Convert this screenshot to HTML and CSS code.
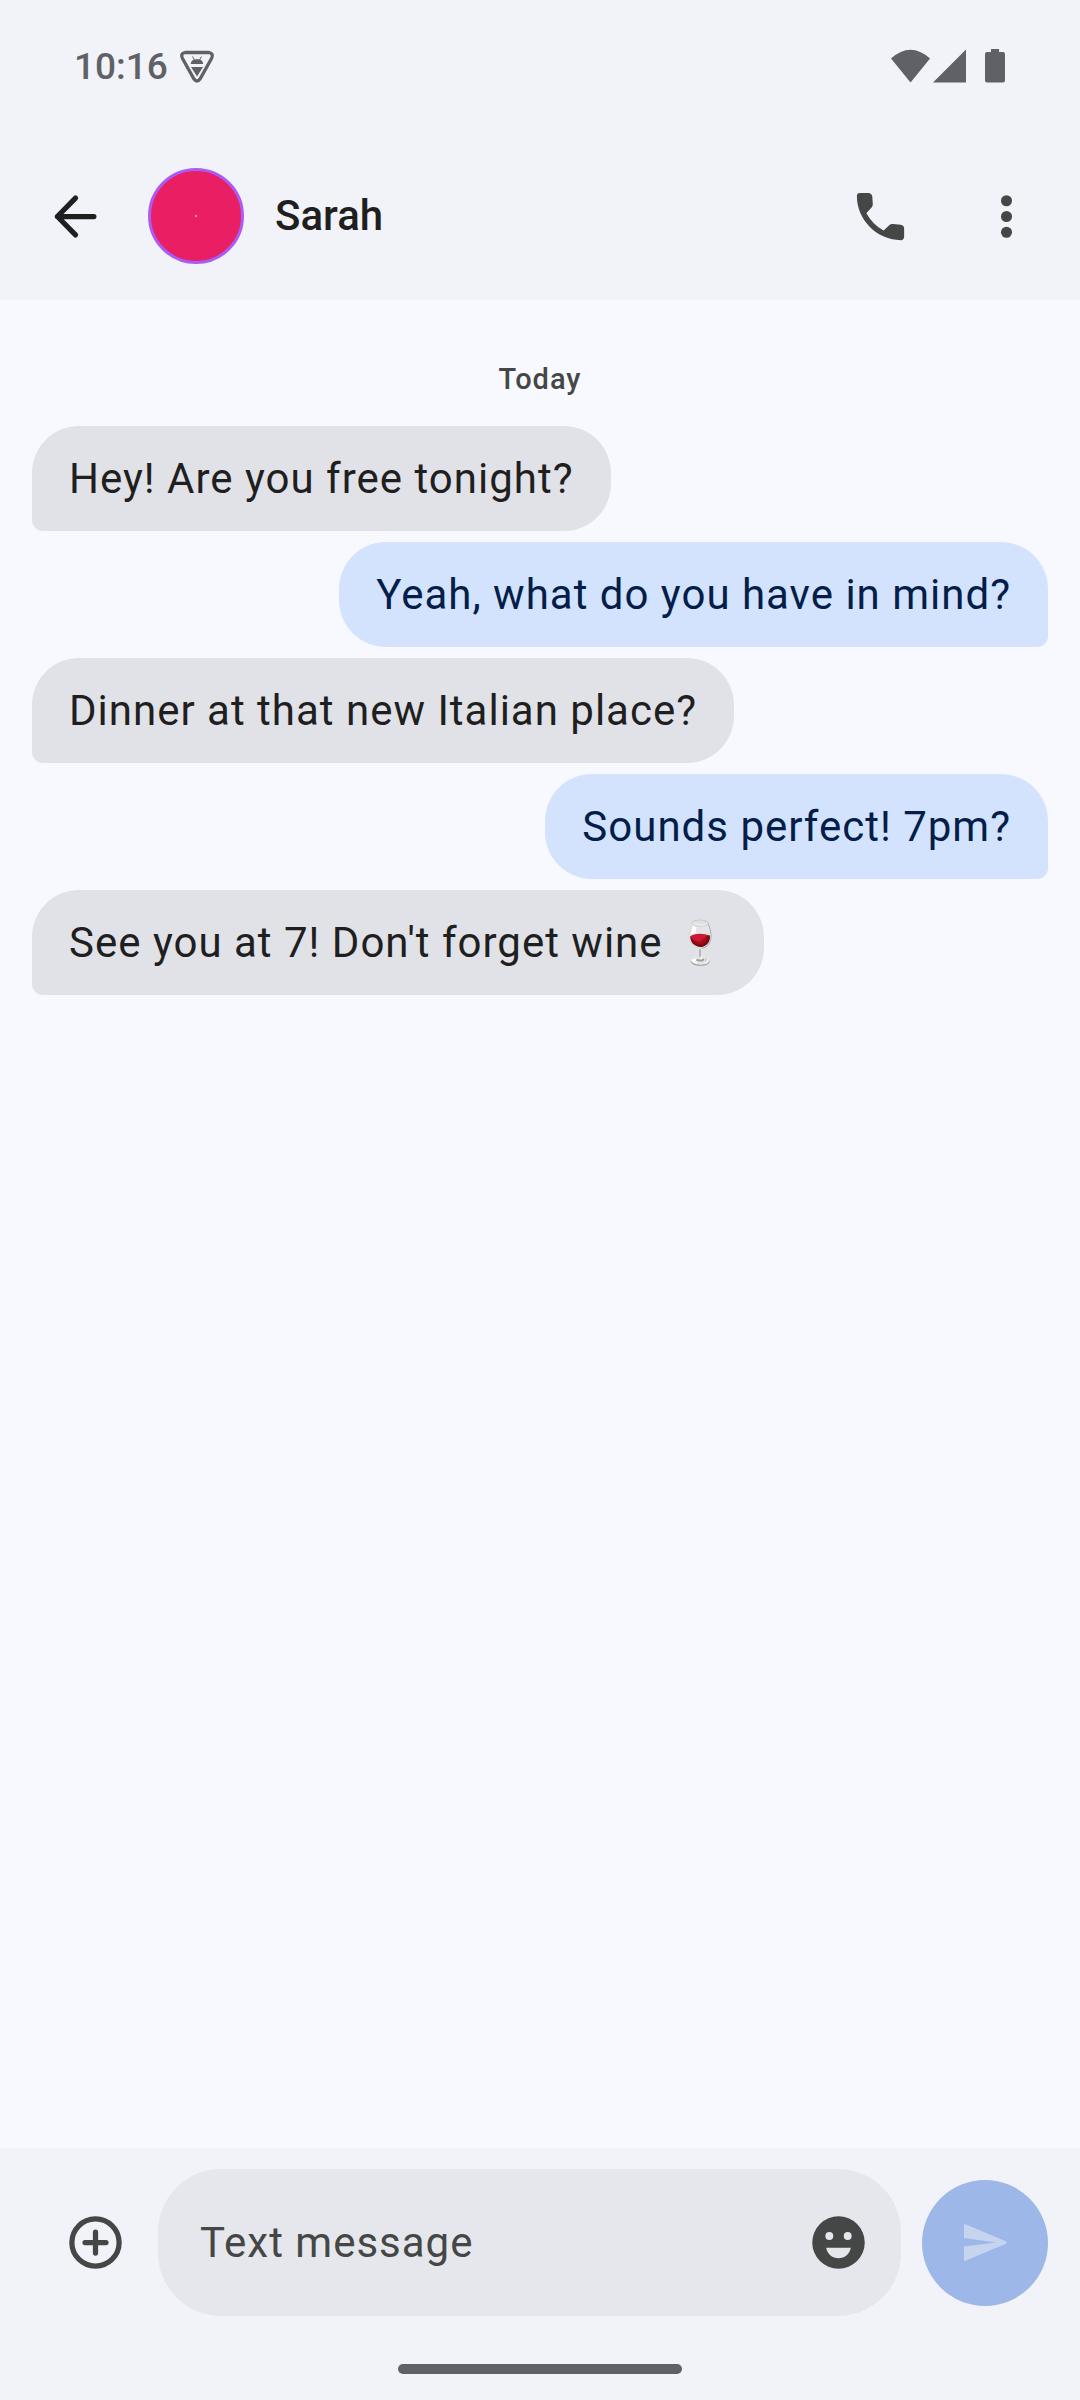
FILE: index.html
```html
<!DOCTYPE html>
<html lang="en">
<head>
<meta charset="utf-8">
<meta name="viewport" content="width=device-width, initial-scale=1">
<title>Sarah</title>
<link rel="stylesheet" href="styles.css">
</head>
<body>
<div class="screen">
  <header class="top">
    <div class="status">
      <time class="clock">10:16</time>
      <svg class="debug-icon" viewBox="0 0 36 34" aria-hidden="true">
        <path d="M6 3.500H30Q35 4.500 32.500 9.500L21 30Q18 34 15 30L3.500 9.500Q1 4.500 6 3.500Z" fill="none" stroke="currentColor" stroke-width="3.300"/>
        <path d="M11.800 15C12 11.500 14.600 10.200 18 10.200S24 11.500 24.200 15ZM12 18H24L18 27.500Z" fill="currentColor"/>
        <path d="M13.500 7.500l2 3.500M22.500 7.500l-2 3.500" fill="none" stroke="currentColor" stroke-width="1"/>
      </svg>
      <svg class="status-right" viewBox="0 0 116 36" aria-hidden="true" fill="currentColor">
        <path d="M20.500 34.500L1 10.500Q20.500-7 40 10.500Z"/>
        <path d="M43 34.500H76V1.500Z"/>
        <path d="M101 1h8v3h4q2 0 2 2v26.500q0 2-2 2H97q-2 0-2-2V6q0-2 2-2h4Z"/>
      </svg>
    </div>
    <div class="app-bar">
      <button class="icon-button back" type="button" aria-label="Back">
        <svg viewBox="0 0 24 24" fill="none" stroke="currentColor" stroke-width="2" stroke-linecap="round" stroke-linejoin="round"><path d="M12 5L5.100 12L12 19M5.100 12H19"/></svg>
      </button>
      <span class="avatar"></span>
      <h1 class="name">Sarah</h1>
      <button class="icon-button" type="button" aria-label="Call">
        <svg viewBox="0 0 24 24" fill="currentColor"><path d="M4.200 3H7.400C8.200 3 8.700 3.500 8.850 4.200L9.050 6.900C9.100 7.600 9 8.200 8.600 8.600L6.600 10.750C8.200 13.600 10.400 15.800 13.200 17.350L15.300 15.300C15.700 14.950 16.200 14.850 16.800 14.900L19.700 15.150C20.600 15.300 21 15.800 21 16.600V19.600C21 20.400 20.600 21 19.800 21C10.700 21 3 13.300 3 4.200Q3 3 4.200 3Z"/></svg>
      </button>
      <button class="icon-button" type="button" aria-label="More options">
        <svg viewBox="0 0 24 24" fill="currentColor"><circle cx="12" cy="6" r="2.100"/><circle cx="12" cy="12" r="2.100"/><circle cx="12" cy="18" r="2.100"/></svg>
      </button>
    </div>
  </header>

  <main class="thread">
    <h2 class="day">Today</h2>
    <p class="bubble in">Hey! Are you free tonight?</p>
    <p class="bubble out">Yeah, what do you have in mind?</p>
    <p class="bubble in">Dinner at that new Italian place?</p>
    <p class="bubble out">Sounds perfect! 7pm?</p>
    <p class="bubble in">See you at 7! Don't forget wine 🍷</p>
  </main>

  <footer class="bottom">
    <form class="composer">
      <button class="icon-button" type="button" aria-label="Add attachment">
        <svg viewBox="0 0 24 24" fill="none" stroke="currentColor" stroke-width="2" stroke-linecap="round"><circle cx="12" cy="12" r="9"/><path d="M12 8v8M8 12h8"/></svg>
      </button>
      <div class="field">
        <input class="message" type="text" placeholder="Text message" aria-label="Text message">
        <button class="icon-button" type="button" aria-label="Emoji">
          <svg viewBox="0 0 24 24" fill="currentColor"><path fill-rule="evenodd" d="M12 2a10 10 0 1 1 0 20a10 10 0 1 1 0-20ZM8.500 8a1.500 1.500 0 1 0 0 3a1.500 1.500 0 1 0 0-3ZM15.500 8a1.500 1.500 0 1 0 0 3a1.500 1.500 0 1 0 0-3ZM7.300 14C7.800 16.500 9.700 18 12 18S16.200 16.500 16.700 14Z"/></svg>
        </button>
      </div>
      <button class="send" type="submit" aria-label="Send" disabled>
        <svg viewBox="0 0 24 24" fill="currentColor"><path d="M3.800 5.300Q4 4.800 4.600 5.100L19.700 11.500Q20.400 12 19.700 12.500L4.600 18.900Q4 19.200 3.800 18.700V13.500L16 12L3.800 10.300Z"/></svg>
      </button>
    </form>
    <div class="home-bar"></div>
  </footer>
</div>
</body>
</html>
```

FILE: styles.css
```css
* { box-sizing: border-box; }

body {
  margin: 0;
  font-family: Roboto, "Noto Sans", "Noto Color Emoji", sans-serif;
  color: #1f1f1f;
  background: #f8f9fe;
}

.screen {
  display: flex;
  flex-direction: column;
  min-height: 100vh;
}

button {
  border: 0;
  padding: 0;
  background: none;
  color: inherit;
  font: inherit;
}

.top, .bottom { background: #f1f3f8; }

.status {
  display: flex;
  align-items: center;
  height: 132px;
  padding: 0 74px;
  color: #5f6166;
}

.clock {
  font-size: 37px;
  font-weight: 500;
}

.debug-icon {
  width: 36px;
  height: 34px;
  margin-left: 11px;
}

.status-right {
  width: 116px;
  height: 36px;
  margin-left: auto;
}

.app-bar {
  display: flex;
  align-items: center;
  height: 168px;
  padding: 0 11px 0 12px;
  color: #444746;
}

.icon-button {
  display: grid;
  place-items: center;
  flex: none;
  width: 126px;
  height: 126px;
}

.icon-button svg, .send svg {
  width: 63px;
  height: 63px;
}

.back { color: #1f1f1f; }

.avatar {
  flex: none;
  width: 96px;
  height: 96px;
  margin-left: 10px;
  border: 3px solid #a95cf5;
  border-radius: 50%;
  background: linear-gradient(#f48fb1, #f48fb1) center / 2px 2px no-repeat #e91e63;
}

.name {
  flex: 1;
  margin: 0 0 0 31px;
  font-size: 42px;
  font-weight: 500;
  line-height: 64px;
  color: #1f1f1f;
}

.thread {
  flex: 1;
  display: flex;
  flex-direction: column;
  gap: 11px;
  padding: 58px 32px;
}

.day {
  margin: 0 0 15px;
  font-size: 29px;
  font-weight: 500;
  line-height: 42px;
  letter-spacing: 1px;
  text-align: center;
  color: #444746;
}

.bubble {
  margin: 0;
  padding: 21px 37px;
  font-size: 42px;
  line-height: 63px;
  letter-spacing: 1px;
}

.in {
  align-self: flex-start;
  border-radius: 47px 47px 47px 11px;
  background: #e1e2e7;
}

.out {
  align-self: flex-end;
  border-radius: 47px 47px 11px 47px;
  background: #d3e3fd;
  color: #041e49;
}

.bottom { padding-bottom: 26px; }

.composer {
  display: flex;
  align-items: center;
  padding: 21px 32px 0;
  color: #444746;
}

.field {
  flex: 1;
  display: flex;
  align-items: center;
  min-width: 0;
  height: 147px;
  margin-right: 21px;
  padding-left: 42px;
  border-radius: 63px;
  background: #e5e7ec;
}

.message {
  flex: 1;
  min-width: 0;
  height: 63px;
  padding: 0;
  border: 0;
  outline: 0;
  background: none;
  font: 400 42px Roboto, "Noto Sans", sans-serif;
  letter-spacing: 1px;
  color: #1f1f1f;
}

.message::placeholder {
  color: #444746;
  opacity: 1;
}

.send {
  display: grid;
  place-items: center;
  flex: none;
  width: 126px;
  height: 126px;
  border-radius: 50%;
  background: #9cb7e8;
  color: #c6d4ef;
}

.home-bar {
  width: 284px;
  height: 10px;
  margin: 48px auto 0;
  border-radius: 5px;
  background: #5f6166;
}
```
